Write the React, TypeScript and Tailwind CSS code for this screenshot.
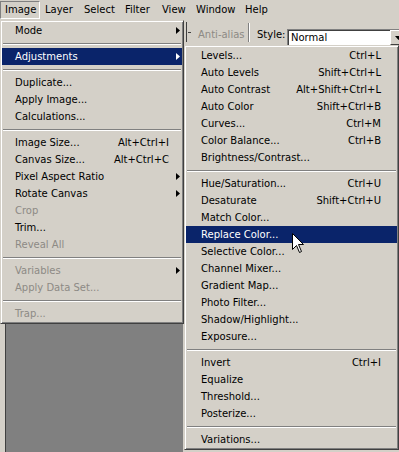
type Item =
  | { sep: true }
  | { label: string; shortcut?: string; sub?: boolean; disabled?: boolean; active?: boolean };

const imageMenu: Item[] = [
  { label: "Mode", sub: true },
  { sep: true },
  { label: "Adjustments", sub: true, active: true },
  { sep: true },
  { label: "Duplicate..." },
  { label: "Apply Image..." },
  { label: "Calculations..." },
  { sep: true },
  { label: "Image Size...", shortcut: "Alt+Ctrl+I" },
  { label: "Canvas Size...", shortcut: "Alt+Ctrl+C" },
  { label: "Pixel Aspect Ratio", sub: true },
  { label: "Rotate Canvas", sub: true },
  { label: "Crop", disabled: true },
  { label: "Trim..." },
  { label: "Reveal All", disabled: true },
  { sep: true },
  { label: "Variables", sub: true, disabled: true },
  { label: "Apply Data Set...", disabled: true },
  { sep: true },
  { label: "Trap...", disabled: true },
];

const adjustMenu: Item[] = [
  { label: "Levels...", shortcut: "Ctrl+L" },
  { label: "Auto Levels", shortcut: "Shift+Ctrl+L" },
  { label: "Auto Contrast", shortcut: "Alt+Shift+Ctrl+L" },
  { label: "Auto Color", shortcut: "Shift+Ctrl+B" },
  { label: "Curves...", shortcut: "Ctrl+M" },
  { label: "Color Balance...", shortcut: "Ctrl+B" },
  { label: "Brightness/Contrast..." },
  { sep: true },
  { label: "Hue/Saturation...", shortcut: "Ctrl+U" },
  { label: "Desaturate", shortcut: "Shift+Ctrl+U" },
  { label: "Match Color..." },
  { label: "Replace Color...", active: true },
  { label: "Selective Color..." },
  { label: "Channel Mixer..." },
  { label: "Gradient Map..." },
  { label: "Photo Filter..." },
  { label: "Shadow/Highlight..." },
  { label: "Exposure..." },
  { sep: true },
  { label: "Invert", shortcut: "Ctrl+I" },
  { label: "Equalize" },
  { label: "Threshold..." },
  { label: "Posterize..." },
  { sep: true },
  { label: "Variations..." },
];

// menu bar entries with the width of each slot
const menuBar = [
  { name: "Image", w: "w-[40px]" },
  { name: "Layer", w: "w-[39px]" },
  { name: "Select", w: "w-[41px]" },
  { name: "Filter", w: "w-[37px]" },
  { name: "View", w: "w-[34px]" },
  { name: "Window", w: "w-[49px]" },
  { name: "Help", w: "w-[33px]" },
];

function Arrow({ white }: { white?: boolean }) {
  return (
    <svg width="4" height="7" viewBox="0 0 4 7">
      <path d="M0 0 L4 3.5 L0 7 Z" fill={white ? "#ffffff" : "#000000"} />
    </svg>
  );
}

function Menu({ items, side }: { items: Item[]; side: "main" | "sub" }) {
  const pad = side === "main" ? "pl-[13px]" : "pl-[15px]";
  return (
    <div className="bg-[#d4d0c8] border border-t-[#d4d0c8] border-l-[#d4d0c8] border-r-[#404040] border-b-[#404040] shadow-[inset_1px_1px_#ffffff,inset_-1px_-1px_#808080] p-[1px]">
      {items.map((it, i) =>
        "sep" in it ? (
          <div key={i} className="h-[9px] flex flex-col justify-center px-[1px]">
            <div className="h-[1px] bg-[#808080]" />
            <div className="h-[1px] bg-white" />
          </div>
        ) : (
          <div
            key={i}
            className={`h-[17px] flex items-center ${pad} ${
              it.active ? "bg-[#0a246a] text-white" : it.disabled ? "text-[#8d8a85]" : "text-black"
            }`}
          >
            <span className="flex-1 whitespace-nowrap">{it.label}</span>
            {it.shortcut && <span className="whitespace-nowrap">{it.shortcut}</span>}
            <span className={`flex items-center ${side === "main" ? "w-[13px] pl-[7px]" : "w-[16px]"}`}>
              {it.sub && <Arrow white={it.active} />}
            </span>
          </div>
        )
      )}
    </div>
  );
}

export default function App() {
  return (
    <div
      className="relative w-[399px] h-[452px] overflow-hidden bg-[#d4d0c8] text-[10px] leading-none"
      style={{ fontFamily: '"DejaVu Sans", Verdana, sans-serif' }}
    >
      {/* menu bar */}
      <div className="h-[20px] flex items-center">
        {menuBar.map((m, i) => (
          <div
            key={m.name}
            className={`${m.w} shrink-0 h-[18px] flex items-center pl-[4px] whitespace-nowrap border ${
              i === 0 ? "border-t-[#808080] border-l-[#808080] border-r-white border-b-white" : "border-transparent"
            }`}
          >
            {m.name}
          </div>
        ))}
      </div>

      {/* options bar */}
      <div className="h-[25px] flex items-center">
        <div className="w-[186px] shrink-0" />
        <div className="shrink-0 flex items-center h-[20px] self-start mt-[2px]">
          <div className="w-[1px] h-full bg-[#404040]" />
          <div className="w-[3px] h-[1px] bg-[#404040] ml-[1px]" />
        </div>
        <span className="shrink-0 ml-[7px] mt-[4px] w-[50px] whitespace-nowrap text-[#8d8a85]">Anti-alias</span>
        <div className="shrink-0 h-[19px] flex">
          <div className="w-[1px] bg-[#808080]" />
          <div className="w-[1px] bg-white" />
        </div>
        <span className="shrink-0 ml-[7px] mt-[4px] w-[30px] whitespace-nowrap">Style:</span>
        <div className="shrink-0 mt-[9px] h-[17px] w-[120px] flex bg-white border border-t-[#808080] border-l-[#808080] border-r-white border-b-white shadow-[inset_1px_1px_#404040]">
          <span className="flex-1 pl-[3px] pt-[3px]">Normal</span>
          <div className="w-[16px] bg-[#d4d0c8] border border-t-white border-l-white border-r-[#404040] border-b-[#404040] flex justify-center pt-[5px]">
            <svg width="7" height="4" viewBox="0 0 7 4">
              <path d="M0 0 H7 L3.5 4 Z" fill="#000" />
            </svg>
          </div>
        </div>
      </div>

      {/* workspace */}
      <div className="flex h-[407px]">
        <div className="w-[5px]" />
        <div className="w-[178px] bg-[#808080] border-l border-[#404040]" />
      </div>

      {/* Image menu */}
      <div className="absolute left-0 top-[20px] w-[184px]">
        <Menu items={imageMenu} side="main" />
      </div>

      {/* Adjustments submenu */}
      <div className="absolute left-[184px] top-[45px] w-[215px]">
        <Menu items={adjustMenu} side="sub" />
      </div>

      {/* mouse pointer */}
      <svg className="absolute left-[292px] top-[233px]" width="12" height="20" viewBox="0 0 12 20">
        <path
          d="M0.5 0.5 L0.5 16.5 L4.5 12.5 L7.5 19.5 L9.5 18.5 L6.5 11.5 L11.5 11.5 Z"
          fill="#ffffff"
          stroke="#000000"
          strokeWidth="1"
        />
      </svg>
    </div>
  );
}
